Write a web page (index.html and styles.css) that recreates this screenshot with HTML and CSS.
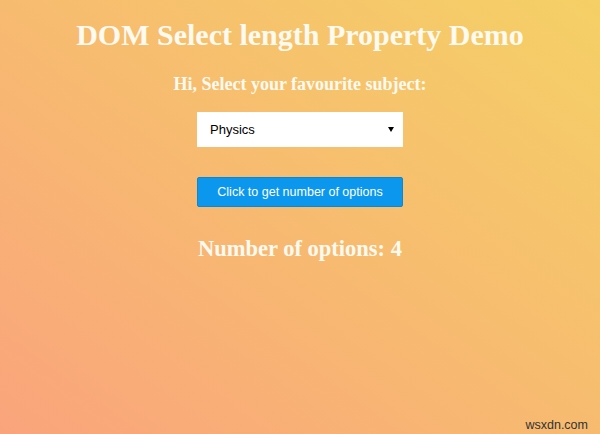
FILE: index.html
```html
<!DOCTYPE html>
<html lang="en">
<head>
<meta charset="utf-8">
<title>DOM Select length Property Demo</title>
<link rel="stylesheet" href="styles.css">
</head>
<body>
<main class="page">
  <h1 class="title">DOM Select length Property Demo</h1>
  <h3 class="prompt">Hi, Select your favourite subject:</h3>
  <div class="select-wrap">
    <select class="subject">
      <option>Physics</option>
      <option>Maths</option>
      <option>Chemistry</option>
      <option>Biology</option>
    </select>
  </div>
  <button class="count-btn" type="button">Click to get number of options</button>
  <h2 class="result">Number of options: 4</h2>
</main>
<div class="watermark">wsxdn.com</div>
</body>
</html>
```

FILE: styles.css
```css
html, body {
  margin: 0;
  height: 100%;
}
body {
  background: linear-gradient(to top right, #faa47c 0%, #f7bb70 50%, #f5d066 100%);
  font-family: "Liberation Serif", "Times New Roman", serif;
  color: #fff;
  overflow: hidden;
  position: relative;
}
.page {
  display: flex;
  flex-direction: column;
  align-items: center;
  padding-top: 18px;
}
.title {
  margin: 0;
  font-size: 30px;
  line-height: 34px;
  font-weight: bold;
  color: #fffaf0;
}
.prompt {
  margin: 22px 0 0;
  font-size: 18px;
  line-height: 20px;
  font-weight: bold;
  color: #fffaf0;
}
.select-wrap {
  position: relative;
  margin-top: 18px;
  width: 206px;
  height: 35px;
}
.select-wrap::after {
  content: "";
  position: absolute;
  right: 9px;
  top: 15px;
  border-left: 3px solid transparent;
  border-right: 3px solid transparent;
  border-top: 5px solid #000;
  pointer-events: none;
}
.subject {
  appearance: none;
  -webkit-appearance: none;
  width: 100%;
  height: 100%;
  border: none;
  border-radius: 0;
  background: #fff;
  padding: 0 0 0 13px;
  font-family: "Liberation Sans", Arial, sans-serif;
  font-size: 13px;
  color: #000;
}
.count-btn {
  margin-top: 30px;
  width: 206px;
  height: 30px;
  background: #0c97ee;
  border: 1px solid #0a88d6;
  border-radius: 2px;
  color: #fff;
  font-family: "Liberation Sans", Arial, sans-serif;
  font-size: 12.5px;
  padding: 0;
}
.result {
  margin: 29px 0 0;
  font-size: 22.5px;
  line-height: 26px;
  font-weight: bold;
  color: #fffaf0;
}
.watermark {
  position: absolute;
  right: 12px;
  bottom: 2px;
  font-family: "Liberation Sans", Arial, sans-serif;
  font-size: 12.5px;
  color: #333;
}
```
